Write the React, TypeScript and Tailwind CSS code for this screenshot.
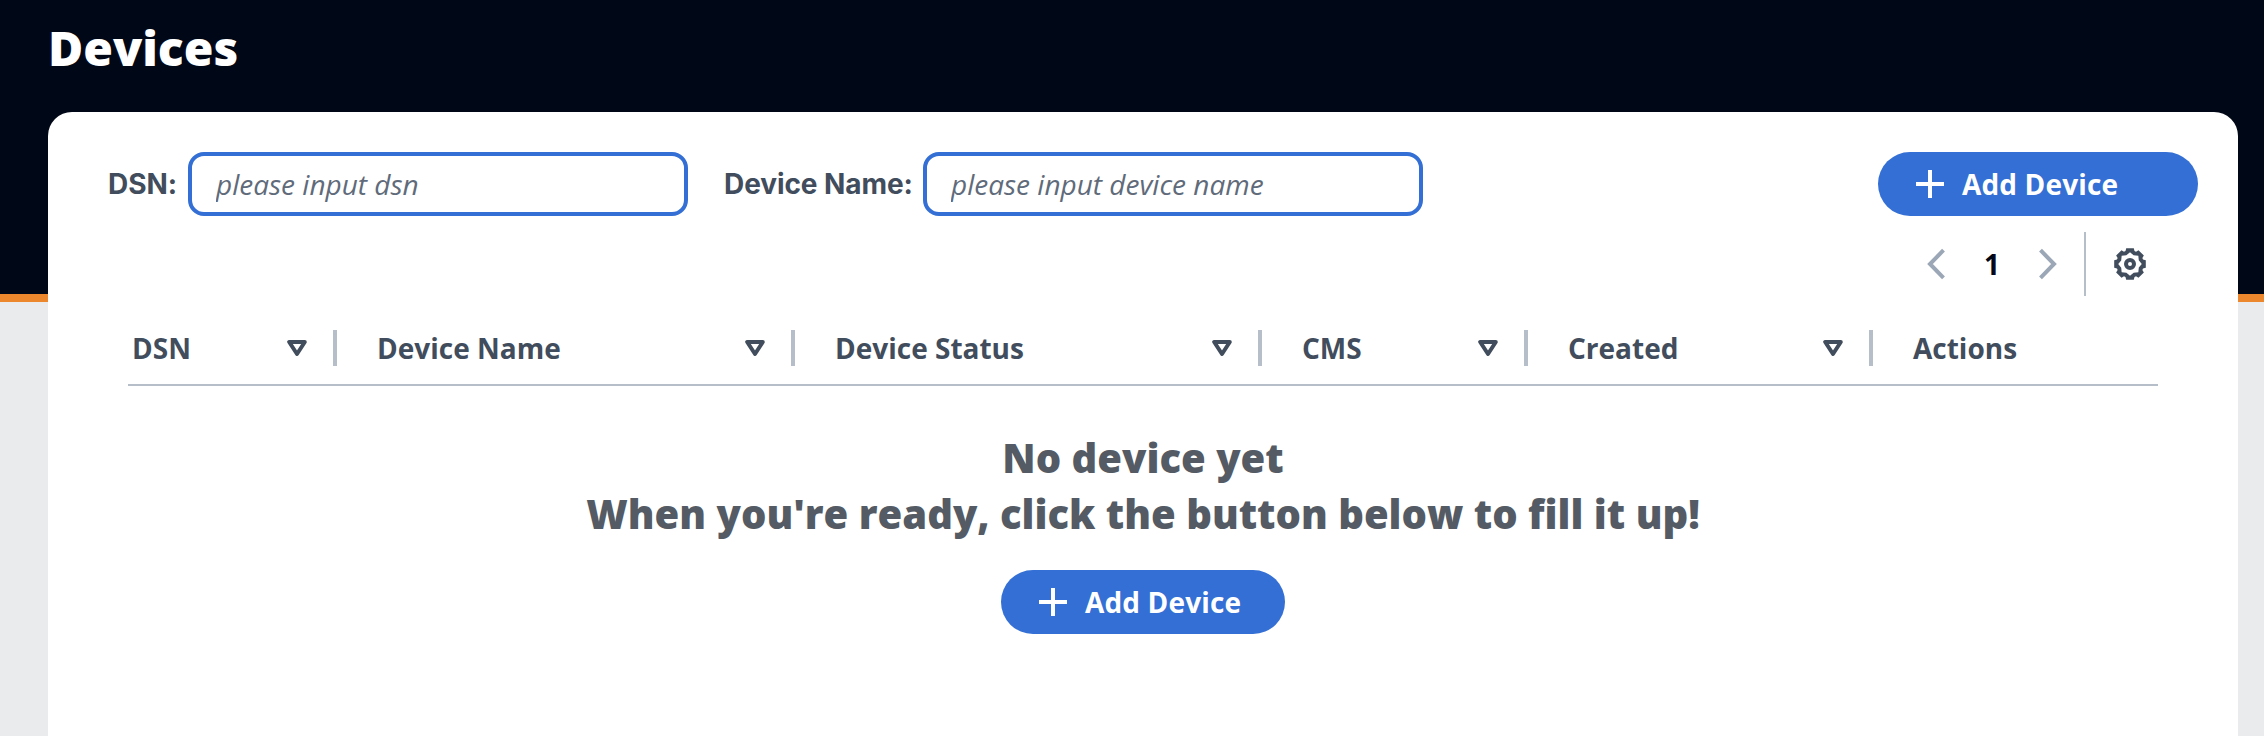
import React from "react";

const columns = [
  { label: "DSN", width: "w-[209px] pl-1" },
  { label: "Device Name", width: "w-[458px] pl-10" },
  { label: "Device Status", width: "w-[467px] pl-10" },
  { label: "CMS", width: "w-[266px] pl-10" },
  { label: "Created", width: "w-[345px] pl-10" },
];

function AddButton({ className }: { className: string }) {
  return (
    <button
      className={`flex h-16 items-center rounded-full bg-[#336fd4] pl-[38px] text-[28px] leading-10 font-bold tracking-[0.14px] text-white ${className}`}
    >
      <svg width="28" height="28" viewBox="0 0 28 28" stroke="currentColor" strokeWidth="4" className="mr-[18px]">
        <path d="M14 0v28M0 14h28" />
      </svg>
      Add Device
    </button>
  );
}

function Field({ label, placeholder, gap }: { label: string; placeholder: string; gap: string }) {
  return (
    <label className="flex items-center font-[Inter,sans-serif] text-[28px] leading-10 font-bold tracking-[-0.08px] text-[#414d5c]">
      <span className={gap}>{label}</span>
      <input
        placeholder={placeholder}
        className="h-16 w-[500px] rounded-2xl border-4 border-[#336fd4] bg-white px-6 font-['Open_Sans',sans-serif] text-[28px] font-normal tracking-normal placeholder:text-[#5f6b7a] placeholder:italic"
      />
    </label>
  );
}

function Chevron({ flip }: { flip?: boolean }) {
  return (
    <svg width="20" height="32" viewBox="0 0 20 32" fill="none" stroke="#9ba7b6" strokeWidth="4" className={flip ? "rotate-180" : ""}>
      <path d="M17.500 2.200L4 16l13.500 13.800" />
    </svg>
  );
}

// Closed outline made by repeating the local points every 45 degrees.
function ring(points: number[][]) {
  const out: string[] = [];
  for (let k = 0; k < 8; k++) {
    const a = (k * Math.PI) / 4;
    for (const [x, y] of points) {
      out.push(`${(x * Math.cos(a) - y * Math.sin(a)).toFixed(2)} ${(x * Math.sin(a) + y * Math.cos(a)).toFixed(2)}`);
    }
  }
  return `M${out.join("L")}Z`;
}

const gearPath =
  ring([[-4.5, -13], [-3.8, -15.8], [3.8, -15.8], [4.5, -13]]) + ring([[0, -11.8], [3.6, -8.8]]);

function Gear() {
  return (
    <svg width="32" height="32" viewBox="-16 -16 32 32" fill="#414d5c">
      <path fillRule="evenodd" d={gearPath} />
      <circle r="4" fill="none" stroke="#414d5c" strokeWidth="4" />
    </svg>
  );
}

export default function App() {
  return (
    <div className="flex h-[736px] w-full flex-col overflow-hidden bg-[linear-gradient(#000716_294px,#ec872d_294px,#ec872d_302px,#e9ebed_302px)] pr-[26px] pl-12 font-['Open_Sans',sans-serif]">
      <header className="flex h-28 shrink-0 items-start pt-[17px]">
        <h1 className="text-[48px] leading-[62px] font-extrabold text-white">Devices</h1>
      </header>
      <main className="flex grow flex-col rounded-t-3xl bg-white pt-10">
        <div className="flex items-center pr-10 pl-[60px]">
          <Field label="DSN:" placeholder="please input dsn" gap="w-20" />
          <div className="w-9" />
          <Field label="Device Name:" placeholder="please input device name" gap="w-[199px]" />
          <AddButton className="ml-auto w-80" />
        </div>
        <div className="mt-4 flex h-16 items-center justify-end pr-[92px]">
          <Chevron />
          <span className="mx-[38px] w-4 text-center text-[28px] leading-10 font-bold text-[#000716]">1</span>
          <Chevron flip />
          <div className="mr-7 ml-[26px] h-16 w-0.5 bg-[#b6bec9]" />
          <Gear />
        </div>
        <div className="mr-20 ml-20 flex h-[90px] items-end border-b-2 border-[#b6bec9] pb-[18px] text-[28px] leading-9 font-bold text-[#414d5c]">
          {columns.map((c) => (
            <div key={c.label} className={`flex h-9 shrink-0 items-center border-r-4 border-[#b6bec9] pr-[26px] ${c.width}`}>
              {c.label}
              <svg width="20" height="20" viewBox="0 0 20 20" fill="none" stroke="#414d5c" strokeWidth="4" strokeLinejoin="round" className="ml-auto">
                <path d="M2.200 4h15.600l-7.800 12z" />
              </svg>
            </div>
          ))}
          <div className="pl-10">Actions</div>
        </div>
        <div className="flex flex-col items-center pt-[44px]">
          <h2 className="text-center text-[40px] leading-[56px] font-extrabold text-[#545b64]">
            No device yet
            <br />
            When you're ready, click the button below to fill it up!
          </h2>
          <AddButton className="mt-7 w-[284px]" />
        </div>
      </main>
    </div>
  );
}
